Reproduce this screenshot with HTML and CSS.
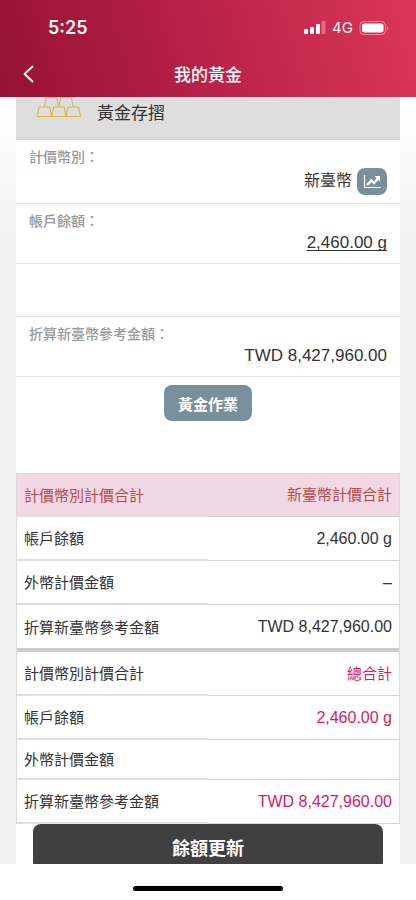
FILE: index.html
```html
<!DOCTYPE html>
<html lang="zh-Hant">
<head>
<meta charset="utf-8">
<meta name="viewport" content="width=device-width, initial-scale=1">
<title>我的黃金</title>
<link rel="stylesheet" href="styles.css">
</head>
<body>
<div class="app">
  <header class="header">
    <div class="status">
      <span class="time">5:25</span>
      <div class="status-right">
        <svg width="22" height="14" viewBox="0 0 22 14" fill="#fff" aria-hidden="true">
          <rect x="0" y="8" width="4" height="5" rx="1"/>
          <rect x="6" y="6" width="4" height="7" rx="1"/>
          <rect x="12" y="3" width="4" height="10" rx="1"/>
          <rect x="17.500" y="0" width="4" height="13" rx="1" opacity=".3"/>
        </svg>
        <span class="network">4G</span>
        <svg width="30" height="16" viewBox="0 0 30 16" aria-hidden="true">
          <rect x="1" y="1.500" width="25.500" height="13" rx="4" fill="none" stroke="#fff" stroke-opacity=".45"/>
          <rect x="3" y="3.500" width="21.500" height="9" rx="2.500" fill="#fff"/>
          <path d="M28 6v4.500c1.600-.8 1.600-3.700 0-4.500z" fill="#fff" fill-opacity=".5"/>
        </svg>
      </div>
    </div>
    <nav class="nav">
      <button class="back" type="button" aria-label="返回">
        <svg width="11" height="18" viewBox="0 0 11 18" fill="none" stroke="#fff" stroke-width="1.800" stroke-linecap="round" stroke-linejoin="round"><path d="M9.500 1.500 1.500 9l8 7.500"/></svg>
      </button>
      <h1 class="title">我的黃金</h1>
    </nav>
  </header>

  <main class="content">
    <div class="card">
      <div class="account">
        <svg class="gold" width="46" height="21" viewBox="0 0 46 21" fill="none" stroke="#dcb23e" stroke-linejoin="round" aria-hidden="true">
          <path d="M1 19.500 3.300 10h10.400l2 9.500zM15.700 19.500l2-9.500h10.400l2 9.500zM30.100 19.500l2-9.500h10.300l2.300 9.500zM8.300 10l2-9.500h10.500l2 9.500M22.800 10l2-9.500h10.500l2 9.500"/>
        </svg>
        <h2 class="account-name">黃金存摺</h2>
      </div>
      <dl class="details">
        <div class="detail">
          <dt>計價幣別：</dt>
          <dd class="currency">新臺幣
            <button class="chart" type="button" aria-label="走勢圖">
              <svg width="19" height="15" viewBox="0 0 19 15" fill="none" stroke="#fff" aria-hidden="true"><path d="M1.500 1v12.500H18" stroke-width="1.200"/><path d="m4 11 4.500-4.500 2.500 2.500L15 4.500" stroke-width="2.400"/><path d="M11.500 2H17v5.500z" fill="#fff" stroke="none"/></svg>
            </button>
          </dd>
        </div>
        <div class="detail">
          <dt>帳戶餘額：</dt>
          <dd><a class="balance" href="#summary">2,460.00 g</a></dd>
        </div>
        <div class="spacer"></div>
        <div class="detail">
          <dt>折算新臺幣參考金額：</dt>
          <dd>TWD 8,427,960.00</dd>
        </div>
      </dl>
      <div class="actions"><button class="operate" type="button">黃金作業</button></div>
      <table class="summary" id="summary">
        <tbody>
          <tr class="heading"><th scope="row">計價幣別計價合計</th><td>新臺幣計價合計</td></tr>
          <tr><th scope="row">帳戶餘額</th><td>2,460.00 g</td></tr>
          <tr><th scope="row">外幣計價金額</th><td>–</td></tr>
          <tr><th scope="row">折算新臺幣參考金額</th><td>TWD 8,427,960.00</td></tr>
        </tbody>
        <tbody class="total">
          <tr><th scope="row">計價幣別計價合計</th><td>總合計</td></tr>
          <tr><th scope="row">帳戶餘額</th><td>2,460.00 g</td></tr>
          <tr class="short"><th scope="row">外幣計價金額</th><td></td></tr>
          <tr><th scope="row">折算新臺幣參考金額</th><td>TWD 8,427,960.00</td></tr>
        </tbody>
      </table>
      <button class="refresh" type="button">餘額更新</button>
    </div>
  </main>
  <footer class="footer"><div class="home"></div></footer>
</div>
</body>
</html>
```
FILE: styles.css
```css
* {
  box-sizing: border-box;
}

body,
h1,
h2,
dl,
dd {
  margin: 0;
}

body {
  color: #333;
  font-family: "Liberation Sans", "Noto Sans CJK TC", sans-serif;
  background: #fff;
}

button {
  padding: 0;
  border: 0;
  font-family: inherit;
  cursor: pointer;
}

svg {
  display: block;
}

.app {
  display: flex;
  flex-direction: column;
  height: 100vh;
}

.header {
  flex: none;
  color: #fff;
  background: linear-gradient(75deg, #961234 0%, #b92246 50%, #dc3658 100%);
}

.status {
  display: flex;
  justify-content: space-between;
  align-items: center;
  height: 52px;
  padding: 4px 27px 0 48px;
}

.time {
  font: 600 18px/24px Inter, sans-serif;
}

.status-right {
  display: flex;
  align-items: center;
  gap: 6px;
}

.network {
  font: 400 15px/20px Inter, sans-serif;
}

.nav {
  display: grid;
  grid-template-columns: 44px 1fr 44px;
  align-items: center;
  height: 45px;
  padding-bottom: 2px;
}

.back {
  display: flex;
  justify-content: center;
  align-items: center;
  height: 44px;
  padding-left: 13px;
  background: none;
}

.title {
  font-family: "Noto Sans CJK TC", sans-serif;
  font-size: 17px;
  line-height: 24px;
  font-weight: 500;
  text-align: center;
}

.content {
  flex: 1;
  min-height: 0;
  padding: 0 16px;
  overflow: hidden;
  background: linear-gradient(#fff, #f0f0f0 170px);
}

.card {
  background: #fff;
}

.account {
  display: flex;
  gap: 15px;
  height: 43px;
  padding-left: 20px;
  border-bottom: 3px solid #d8d8d8;
  background: #dedede;
}

.account-name {
  padding-top: 5px;
  font-size: 17px;
  line-height: 24px;
  font-weight: 400;
}

.detail {
  padding: 6px 13px 8px;
  border-bottom: 1px solid #e4e4e4;
}

.detail dt {
  padding-bottom: 1px;
  color: #999;
  font-family: "Noto Sans CJK TC", sans-serif;
  font-size: 14px;
  line-height: 20px;
  font-weight: 500;
}

.detail dd {
  font-size: 17px;
  line-height: 24px;
  text-align: right;
}

.detail .currency {
  display: flex;
  justify-content: flex-end;
  align-items: center;
  gap: 5px;
  height: 28px;
  font-size: 16px;
}

.chart {
  display: flex;
  justify-content: center;
  align-items: center;
  width: 30px;
  height: 27px;
  border-radius: 8px;
  background: #78909c;
}

.balance {
  color: inherit;
  text-underline-offset: 2px;
  text-decoration-skip-ink: none;
}

.spacer {
  height: 53px;
  border-bottom: 1px solid #e4e4e4;
}

.actions {
  display: flex;
  justify-content: center;
  padding: 8px 0 52px;
}

.operate {
  height: 36px;
  padding: 0 14px;
  border-radius: 8px;
  color: #fff;
  font-size: 15px;
  font-weight: 700;
  background: #78909c;
}

.summary {
  width: 100%;
  border: solid #dcdcdc;
  border-width: 0 1px;
  border-spacing: 0;
  border-collapse: separate;
  font-size: 15px;
  line-height: 22px;
}

.summary th,
.summary td {
  height: 44px;
  padding: 0 7px;
  border-bottom: 1px solid #d8d8ce;
  font-weight: 400;
}

.summary th {
  width: 50%;
  padding-top: 2px;
  border-bottom: 2px solid #e0e0d8;
  text-align: left;
}

.summary td {
  font-size: 16px;
  text-align: right;
}

.summary .heading th,
.summary .heading td {
  border-top: 1px solid #dcdcdc;
  color: #b94a48;
  font-size: 15px;
  background: #f2d7e4;
}

.summary tbody:first-child tr:last-child > * {
  height: 47px;
  border-bottom: 4px solid #ccc;
}

.summary .total td {
  color: #d81b60;
}

.summary .total tr:first-child td {
  font-size: 15px;
}

.summary .short > * {
  height: 40px;
}

.refresh {
  display: block;
  width: calc(100% - 34px);
  height: 46px;
  margin: 0 auto;
  border-radius: 8px;
  color: #fff;
  font-size: 18px;
  font-weight: 700;
  background: #404040;
}

.footer {
  display: flex;
  flex: none;
  justify-content: center;
  height: 36px;
  padding-top: 22px;
}

.home {
  width: 36%;
  height: 5px;
  border-radius: 3px;
  background: #000;
}
```
